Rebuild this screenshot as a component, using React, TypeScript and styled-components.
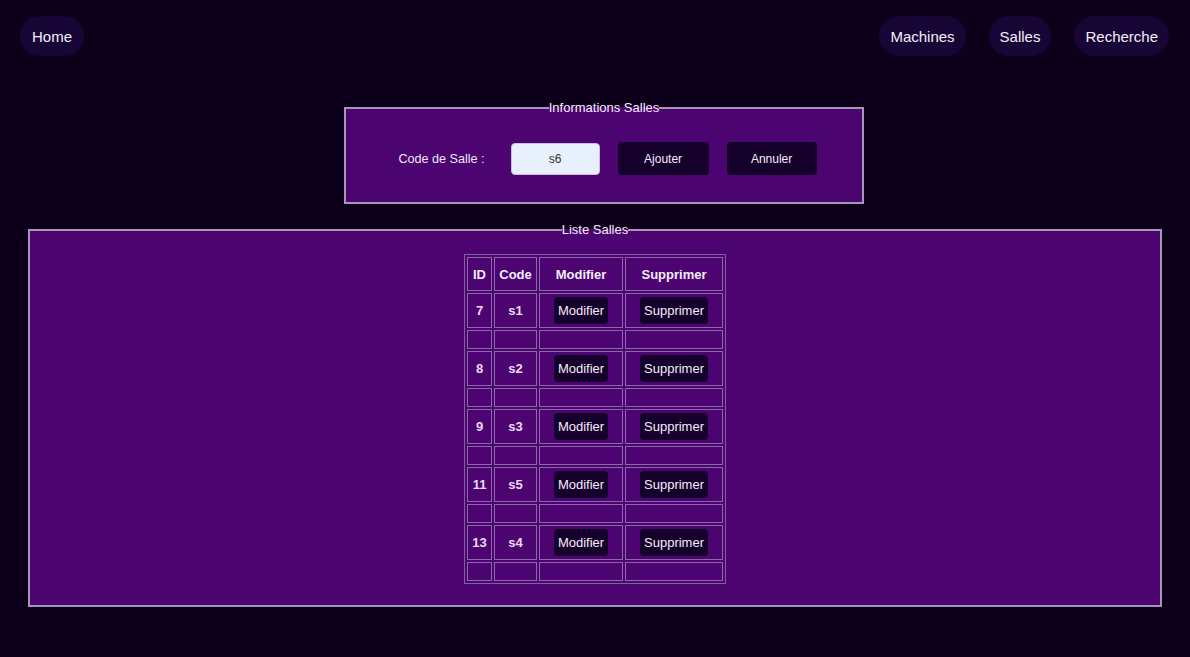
import React from "react";
import styled, { createGlobalStyle } from "styled-components";

const GlobalStyle = createGlobalStyle`
  html, body {
    margin: 0;
    padding: 0;
    background: #0d001a;
    font-family: "Liberation Sans", Arial, sans-serif;
    color: #f4eefa;
  }
`;

const Page = styled.div`
  min-height: 657px;
  background: #0d001a;
  padding: 16px 0 40px;
  box-sizing: border-box;
`;

const Nav = styled.nav`
  display: flex;
  justify-content: space-between;
  align-items: center;
  padding: 0 21px 0 20px;
`;

const NavGroup = styled.div`
  display: flex;
  gap: 23px;
`;

const NavButton = styled.a<{ $px?: number }>`
  display: flex;
  align-items: center;
  height: 40px;
  padding: 0 ${(p) => p.$px ?? 11}px;
  border-radius: 20px;
  background: #170535;
  color: #f4eefa;
  font-size: 15px;
  text-decoration: none;
`;

const Fieldset = styled.fieldset<{ $width?: string; $ml?: string }>`
  box-sizing: border-box;
  background: #4b0470;
  border: 2px solid #a795b8;
  margin: 0;
  margin-left: ${(p) => p.$ml || "auto"};
  margin-right: auto;
  width: ${(p) => p.$width || "auto"};
  min-width: 0;
`;

const Legend = styled.legend`
  padding: 0;
  margin: 0 auto;
  font-size: 13px;
  line-height: 15px;
  color: #f4eefa;
`;

const InfoFieldset = styled(Fieldset)`
  margin-top: 44px;
  padding: 27px 20px 27px;
`;

const ListFieldset = styled(Fieldset)`
  margin-top: 18px;
  margin-left: 28px;
  margin-right: 28px;
  padding: 17px 20px 21px;
`;

const FormRow = styled.div`
  display: flex;
  align-items: center;
  justify-content: center;
  gap: 18px;
  padding-left: 7px;
`;

const Label = styled.label`
  font-size: 12.6px;
  margin-right: 8px;
  color: #efe6f6;
`;

const Input = styled.input`
  box-sizing: border-box;
  width: 89px;
  height: 32px;
  border: 1px solid #c8c0d8;
  border-radius: 4px;
  background: #e8f0fe;
  color: #333;
  text-align: center;
  font-family: "Liberation Sans", Arial, sans-serif;
  font-size: 12px;
  outline: none;
`;

const DarkButton = styled.button<{ $w?: number; $h?: number; $fs?: number }>`
  box-sizing: border-box;
  height: ${(p) => p.$h || 33}px;
  ${(p) => (p.$w ? `width: ${p.$w}px;` : "padding: 0 4px;")}
  border: none;
  border-radius: 4px;
  background: #14002b;
  color: #f4eefa;
  font-family: "Liberation Sans", Arial, sans-serif;
  font-weight: normal;
  font-size: ${(p) => p.$fs || 12}px;
  cursor: pointer;
`;

const Table = styled.table`
  margin: 0 auto;
  border-collapse: separate;
  border-spacing: 2px;
  border: 1px solid #8060a0;
  font-size: 13px;
`;

const Th = styled.th<{ $w: number }>`
  box-sizing: border-box;
  width: ${(p) => p.$w}px;
  height: 34px;
  padding: 0;
  border: 1px solid #8c68aa;
  font-weight: bold;
  text-align: center;
`;

const Td = styled.td<{ $empty?: boolean }>`
  box-sizing: border-box;
  height: ${(p) => (p.$empty ? 19 : 35)}px;
  padding: 0;
  border: 1px solid #8c68aa;
  text-align: center;
  vertical-align: middle;
  font-weight: bold;
  color: #eadcf6;
`;

const rows = [
  { id: 7, code: "s1" },
  { id: 8, code: "s2" },
  { id: 9, code: "s3" },
  { id: 11, code: "s5" },
  { id: 13, code: "s4" },
];

export default function App() {
  return (
    <>
      <GlobalStyle />
      <Page>
        <Nav>
          <NavGroup>
            <NavButton $px={12}>Home</NavButton>
          </NavGroup>
          <NavGroup>
            <NavButton>Machines</NavButton>
            <NavButton>Salles</NavButton>
            <NavButton>Recherche</NavButton>
          </NavGroup>
        </Nav>

        <InfoFieldset $width="520px" $ml="calc(50% - 251px)">
          <Legend>Informations Salles</Legend>
          <FormRow>
            <Label>Code de Salle :</Label>
            <Input defaultValue="s6" />
            <DarkButton $w={91}>Ajouter</DarkButton>
            <DarkButton $w={90}>Annuler</DarkButton>
          </FormRow>
        </InfoFieldset>

        <ListFieldset>
          <Legend>Liste Salles</Legend>
          <Table>
            <thead>
              <tr>
                <Th $w={25}>ID</Th>
                <Th $w={43}>Code</Th>
                <Th $w={84}>Modifier</Th>
                <Th $w={98}>Supprimer</Th>
              </tr>
            </thead>
            <tbody>
              {rows.map((r) => (
                <React.Fragment key={r.id}>
                  <tr>
                    <Td>{r.id}</Td>
                    <Td>{r.code}</Td>
                    <Td>
                      <DarkButton $h={27} $fs={13}>Modifier</DarkButton>
                    </Td>
                    <Td>
                      <DarkButton $h={27} $fs={13}>Supprimer</DarkButton>
                    </Td>
                  </tr>
                  <tr>
                    <Td $empty />
                    <Td $empty />
                    <Td $empty />
                    <Td $empty />
                  </tr>
                </React.Fragment>
              ))}
            </tbody>
          </Table>
        </ListFieldset>
      </Page>
    </>
  );
}
